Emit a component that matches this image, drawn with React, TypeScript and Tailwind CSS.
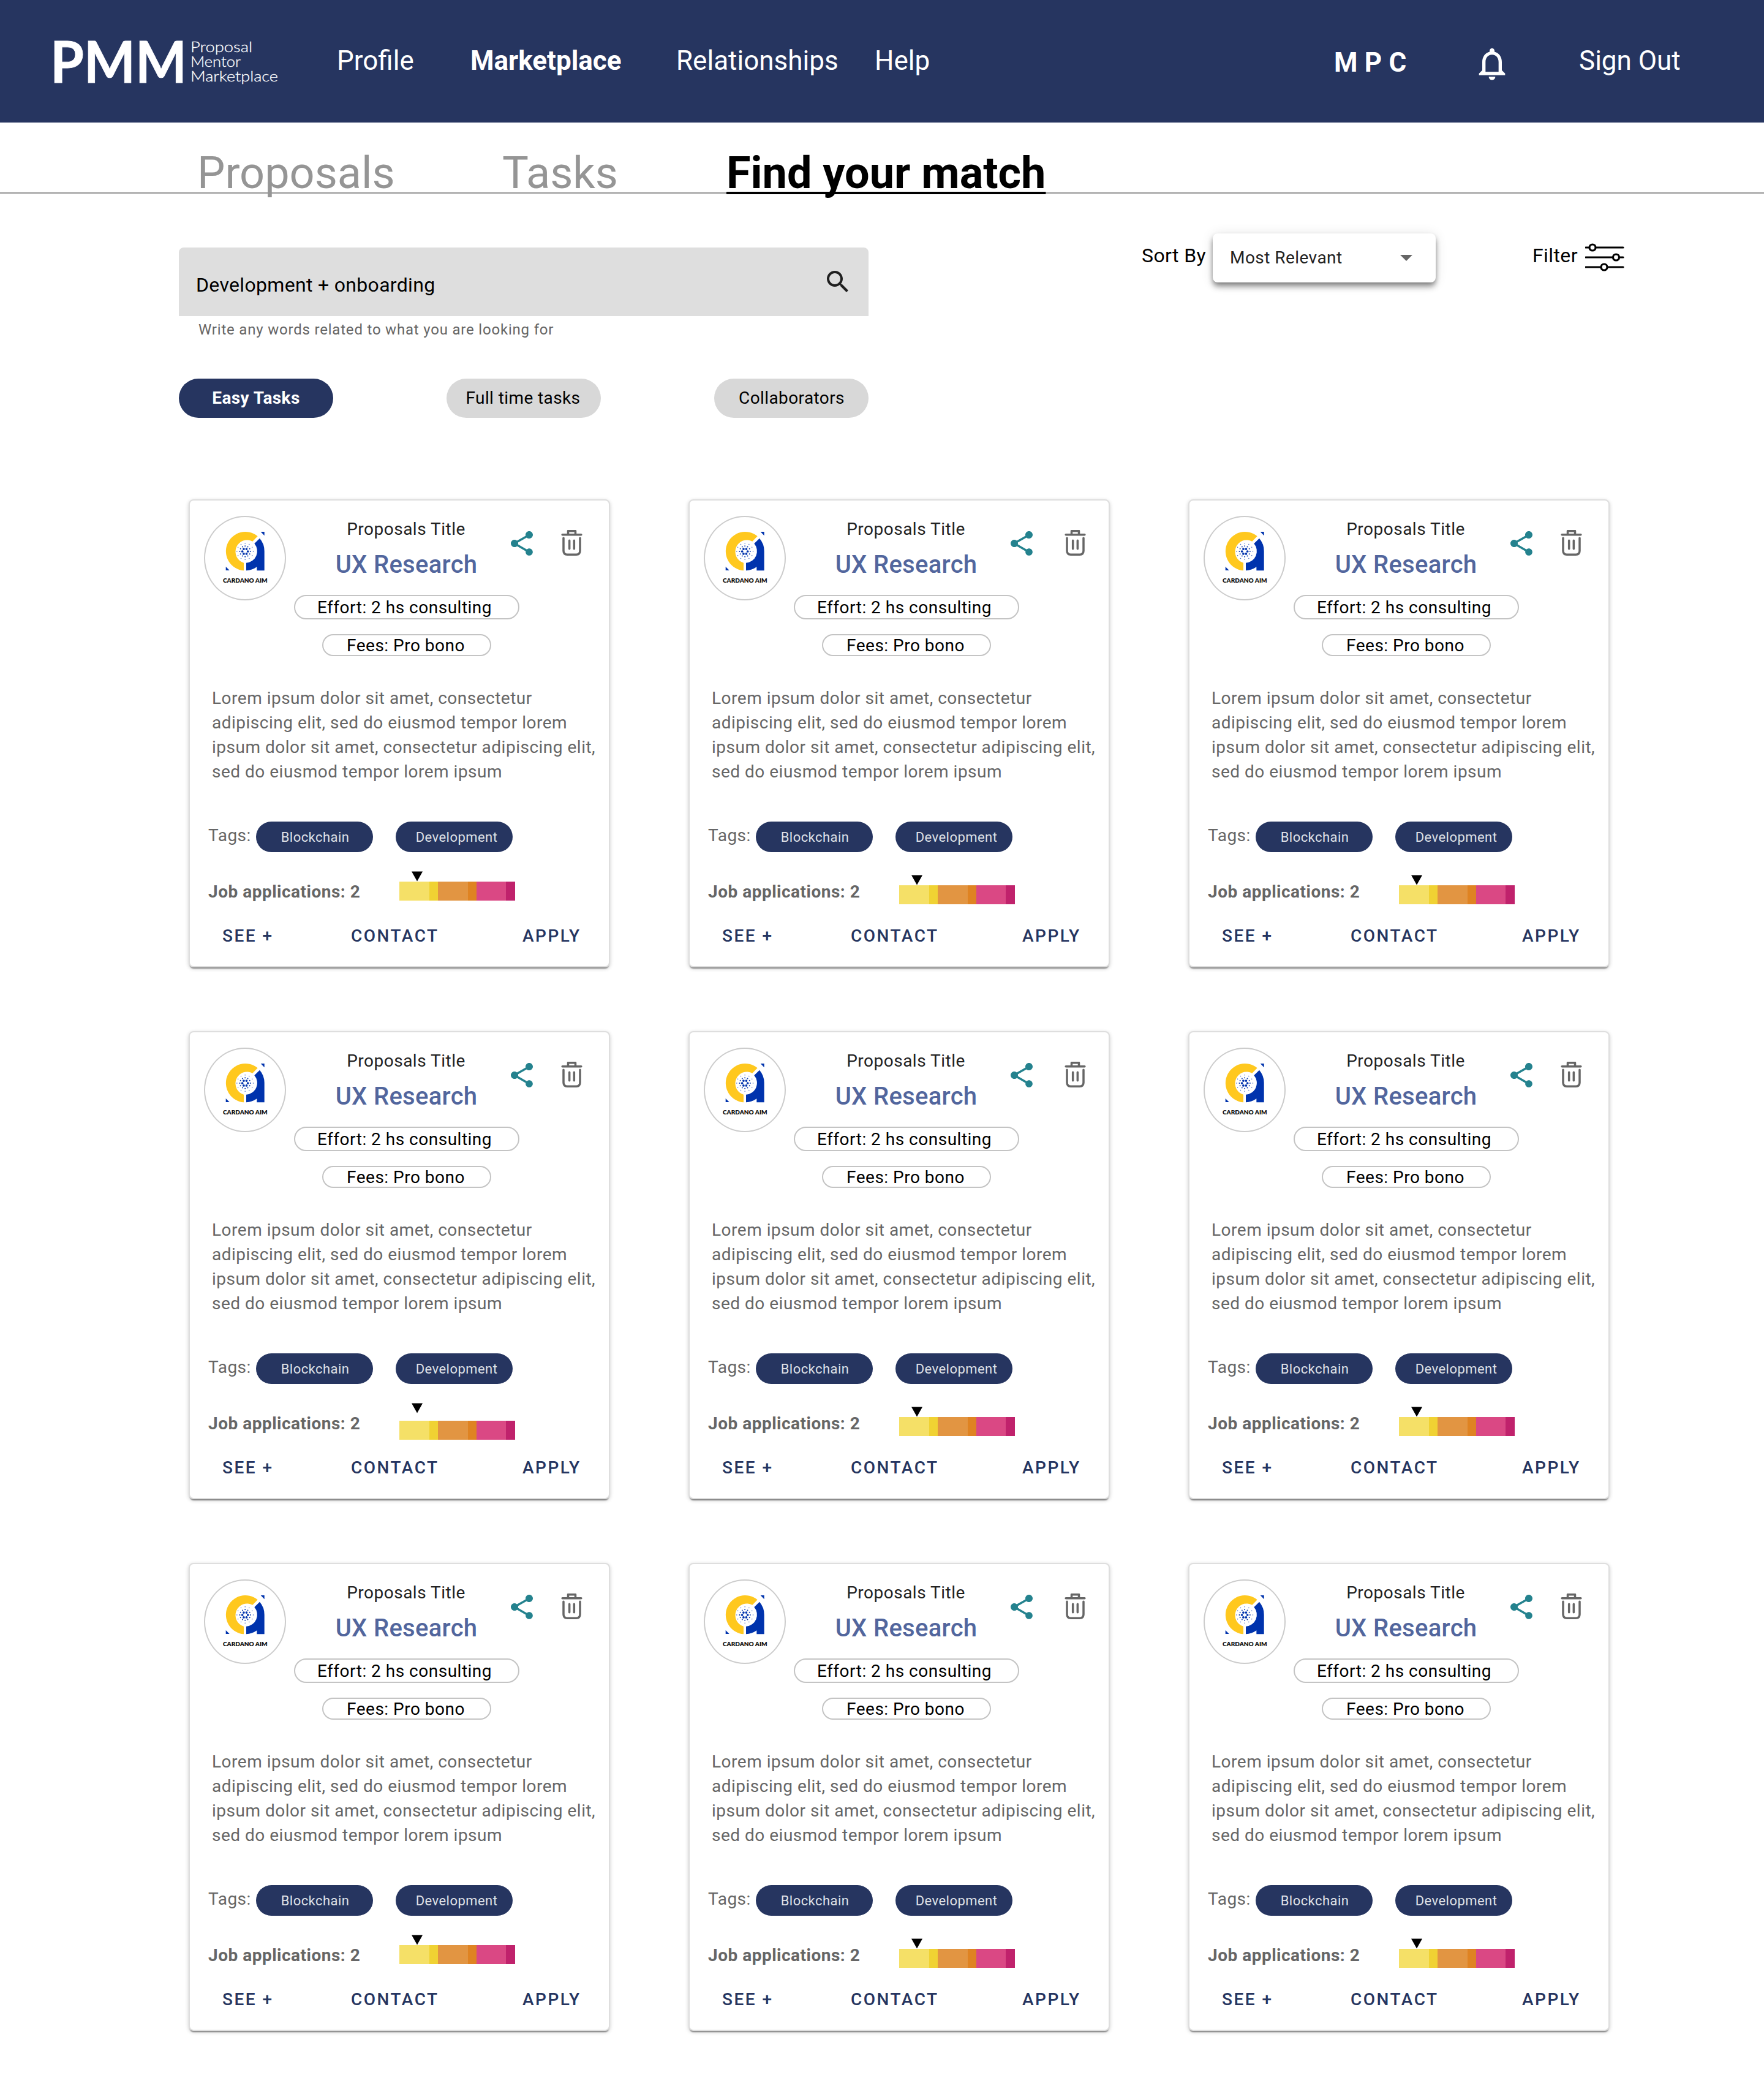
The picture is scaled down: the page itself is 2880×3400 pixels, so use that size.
const HEXAGON = [0, 1, 2, 3, 4, 5];
const DOZEN = [0, 1, 2, 3, 4, 5, 6, 7, 8, 9, 10, 11];

function polar(radius: number, degrees: number): [number, number] {
  const a = (degrees * Math.PI) / 180;
  return [239.5 + radius * Math.cos(a), 210 + radius * Math.sin(a)];
}

function Ring({ items, radius, size, step }: { items: number[]; radius: number; size: number; step: number }) {
  return (
    <>
      {items.map((i) => {
        const [cx, cy] = polar(radius, i * step);
        return <circle key={i} cx={cx} cy={cy} r={size} />;
      })}
    </>
  );
}

function CardanoLogo() {
  return (
    <svg className="h-[134px] w-[130px]" viewBox="44 42 390 402">
      <path fill="#ffc81e" d="M233 304A95 95 0 1 1 301 136L276 161A57 57 0 1 0 233 266Z" />
      <g fill="#0033ad">
        <path d="M311 146A95 95 0 0 1 334 209V304H297V286A95 95 0 0 1 245 304V266A57 57 0 0 0 285 172Z" />
        <path d="M316 114H334V133Z" />
        <path d="M145 285L163 303H145Z" />
        <Ring items={HEXAGON} radius={13.5} size={5.6} step={60} />
        <Ring items={DOZEN} radius={26} size={2.9} step={30} />
        <g opacity="0.8">
          <Ring items={DOZEN} radius={40} size={2.2} step={30} />
        </g>
      </g>
      <text x="131" y="362" fontFamily="Lato, sans-serif" fontWeight="800" fontSize="30" textLength="218" lengthAdjust="spacingAndGlyphs" fill="#111">
        CARDANO AIM
      </text>
    </svg>
  );
}

function ShareIcon() {
  return (
    <svg className="h-12 w-12 shrink-0" viewBox="0 0 24 24" fill="#24828e">
      <path d="M18 16.08c-.76 0-1.44.3-1.96.77L8.91 12.7c.05-.23.09-.46.09-.7s-.04-.47-.09-.7l7.05-4.11c.54.5 1.25.81 2.04.81 1.66 0 3-1.34 3-3s-1.34-3-3-3-3 1.34-3 3c0 .24.04.47.09.7L8.04 9.81C7.5 9.31 6.79 9 6 9c-1.66 0-3 1.34-3 3s1.34 3 3 3c.79 0 1.5-.31 2.04-.81l7.12 4.16c-.05.21-.08.43-.08.65 0 1.61 1.31 2.92 2.92 2.92 1.61 0 2.92-1.31 2.92-2.92s-1.31-2.92-2.92-2.92z" />
    </svg>
  );
}

function TrashIcon() {
  return (
    <svg className="h-[42px] w-[35px] shrink-0" viewBox="406.5 177 105 126" fill="none" stroke="#666" strokeWidth="10.5" strokeLinecap="round" strokeLinejoin="round">
      <path d="M413 200H505" />
      <path d="M441 198V182H477V198" />
      <path d="M418.500 217V279Q418.500 297.500 437 297.500H481Q499.500 297.500 499.500 279V217" />
      <path d="M447.500 229V269M470.500 229V269" />
    </svg>
  );
}

type CardLayout = { arrow: string; bar: string; trash: string };

const LEFT: CardLayout = { arrow: "mt-[31px]", bar: "", trash: "pl-10" };
const LEFT_SPLIT: CardLayout = { arrow: "mt-[31px]", bar: "mt-3", trash: "pl-10" };
const MIDDLE: CardLayout = { arrow: "mt-[37px]", bar: "", trash: "pl-[46px]" };
const RIGHT: CardLayout = { arrow: "mt-[37px]", bar: "", trash: "pl-10" };

const CARDS: CardLayout[] = [LEFT, MIDDLE, RIGHT, LEFT_SPLIT, MIDDLE, RIGHT, LEFT, MIDDLE, RIGHT];

function Meter({ layout }: { layout: CardLayout }) {
  return (
    <div className="flex w-[189px] flex-col">
      <svg className={"ml-5 h-[17px] w-[18px] shrink-0 " + layout.arrow} viewBox="0 0 18 17">
        <path d="M0 0.500H18L9 16.500Z" />
      </svg>
      <div className={"flex h-[30.500px] shrink-0 " + layout.bar}>
        <div className="w-[49px] bg-[#f5e067]" />
        <div className="w-[14px] bg-[#f0d233]" />
        <div className="w-[49px] bg-[#e29542]" />
        <div className="w-[14px] bg-[#df8322]" />
        <div className="w-[48px] bg-[#da4884]" />
        <div className="w-[14.500px] bg-[#c0226c]" />
      </div>
    </div>
  );
}

function ProposalCard({ layout }: { layout: CardLayout }) {
  return (
    <article className="flex h-[764px] w-[688px] flex-col rounded-lg border-2 border-[#dedede] bg-white shadow-[0_4px_2px_-2px_rgba(0,0,0,0.4),0_2px_6px_rgba(0,0,0,0.2)]">
      <div className="flex h-[254px] shrink-0 items-start">
        <div className="mt-[25px] ml-[23px] h-[138px] w-[134px] shrink-0 rounded-[50%] border-2 border-[#ccc]">
          <CardanoLogo />
        </div>
        <div className="ml-[13px] flex w-[368px] shrink-0 flex-col items-center pt-[31px]">
          <div className="pr-0.5 text-[28px] leading-8 tracking-[0.5px] text-[#222]">Proposals Title</div>
          <div className="mt-[18px] pr-px text-[40px] leading-[48px] font-medium tracking-[0.3px] text-[#52669d]">UX Research</div>
          <div className="mt-[25px] h-10 w-[368px] rounded-full border-2 border-[#c4c4c4] pr-[7px] text-center text-[28px] leading-[37px] tracking-[0.5px] text-black">
            Effort: 2 hs consulting
          </div>
          <div className="mt-6 h-9 w-[276px] rounded-full border-2 border-[#c4c4c4] pr-[3px] text-center text-[28px] leading-[33px] tracking-[0.5px] text-black">
            Fees: Pro bono
          </div>
        </div>
        <div className="-ml-[20px] flex pt-[46px]">
          <ShareIcon />
          <div className={"pt-[2px] " + layout.trash}>
            <TrashIcon />
          </div>
        </div>
      </div>
      <p className="mt-[48.500px] pl-9 text-[28px] leading-10 tracking-[0.5px] whitespace-nowrap text-[#666]">
        Lorem ipsum dolor sit amet, consectetur
        <br />
        adipiscing elit, sed do eiusmod tempor lorem
        <br />
        ipsum dolor sit amet, consectetur adipiscing elit,
        <br />
        sed do eiusmod tempor lorem ipsum
      </p>
      <div className="mt-[61.500px] flex h-[50px] pl-[30px]">
        <div className="mt-[3px] w-[78px] text-[28px] leading-10 tracking-[0.5px] text-[#666]">Tags:</div>
        <div className="h-[50px] w-[191px] rounded-full bg-[#263560] pl-0.5 text-center text-[22px] leading-[52px] tracking-[0.45px] text-[#dfe1e7]">Blockchain</div>
        <div className="ml-[37px] h-[50px] w-[191px] rounded-full bg-[#263560] pl-2 text-center text-[22px] leading-[52px] tracking-[0.45px] text-[#dfe1e7]">Development</div>
      </div>
      <div className="flex h-[116px] pl-[30px]">
        <div className="mt-[45px] w-[312px] text-[28px] leading-10 font-bold tracking-[0.5px] text-[#666]">Job applications: 2</div>
        <Meter layout={layout} />
      </div>
      <div className="mt-px flex pl-[53px] text-[28px] leading-10 font-medium tracking-[2.500px] text-[#263560]">
        <div className="w-[210px]">SEE +</div>
        <div className="w-[280px]">CONTACT</div>
        <div>APPLY</div>
      </div>
    </article>
  );
}

function Header() {
  return (
    <header className="flex h-[200px] items-start bg-[#263560] pt-[73px] text-[44px] leading-[52px] whitespace-nowrap text-white">
      <svg className="-mt-[73px] ml-[72px] h-[200px] w-[390px] shrink-0" viewBox="72 0 390 200" fill="#fff">
        <text x="82" y="134.500" fontFamily="Lato, sans-serif" fontWeight="700" fontSize="94" textLength="223" lengthAdjust="spacingAndGlyphs" stroke="#fff" strokeWidth="0.800">PMM</text>
        <g fontFamily="Lato, sans-serif" fontWeight="300" fontSize="24" stroke="#fff" strokeWidth="0.300">
          <text x="311" y="84.500" textLength="101" lengthAdjust="spacingAndGlyphs">Proposal</text>
          <text x="311" y="108.500" textLength="82" lengthAdjust="spacingAndGlyphs">Mentor</text>
          <text x="311" y="132.500" textLength="143" lengthAdjust="spacingAndGlyphs">Marketplace</text>
        </g>
      </svg>
      <a className="ml-[88px] w-[218px]">Profile</a>
      <a className="w-[336px] font-bold">Marketplace</a>
      <a className="w-[324px]">Relationships</a>
      <a className="w-[750px]">Help</a>
      <div className="mt-[3px] w-[226px] font-bold tracking-[0.2px]">M P C</div>
      <svg className="-mt-px h-16 w-16 shrink-0" viewBox="0 0 24 24" fill="#fff">
        <path d="M12 22c1.100 0 2-.9 2-2h-4c0 1.100.9 2 2 2zm6-6v-5c0-3.070-1.630-5.640-4.500-6.320V4c0-.83-.67-1.500-1.500-1.500s-1.500.67-1.500 1.500v.68C7.640 5.360 6 7.920 6 11v5l-2 2v1h16v-1l-2-2zm-2 1H8v-6c0-2.480 1.510-4.500 4-4.500s4 2.020 4 4.500v6z" />
      </svg>
      <a className="ml-[110px]">Sign Out</a>
    </header>
  );
}

function Tabs() {
  return (
    <nav className="flex h-[116px] border-b-2 border-[#959595] pt-[43px] pl-[322px] text-[72px] leading-[80px] whitespace-nowrap text-[#959595]">
      <a className="w-[498px]">Proposals</a>
      <a className="w-[366px]">Tasks</a>
      <a className="font-bold text-black underline decoration-[4px] underline-offset-[6px] [text-decoration-skip-ink:none]">Find your match</a>
    </nav>
  );
}

function SearchPanel() {
  return (
    <div className="w-[1126px] pt-[23px]">
      <div className="flex h-28 items-start justify-between rounded-t-lg bg-[#dedede] pt-8 pr-[26px] pl-7">
        <div className="mt-[9px] text-[32px] leading-10 tracking-[0.32px] text-black">Development + onboarding</div>
        <svg className="h-12 w-12" viewBox="0 0 24 24" fill="#1f1f1f">
          <path d="M15.500 14h-.79l-.28-.27C15.410 12.590 16 11.110 16 9.500 16 5.910 13.090 3 9.500 3S3 5.910 3 9.500 5.910 16 9.500 16c1.610 0 3.090-.59 4.230-1.570l.27.28v.79l5 4.990L20.490 19l-4.990-5zm-6 0C7.010 14 5 11.990 5 9.500S7.010 5 9.500 5 14 7.010 14 9.500 11.990 14 9.500 14z" />
        </svg>
      </div>
      <div className="mt-[6px] pl-8 text-[24px] leading-8 tracking-[0.8px] text-[#666]">Write any words related to what you are looking for</div>
      <div className="mt-16 flex justify-between text-center text-[28px] leading-16 tracking-[0.4px] text-black">
        <div className="w-[252px] rounded-full bg-[#263560] font-bold text-white">Easy Tasks</div>
        <div className="w-[252px] rounded-full bg-[#d8d8d8] pr-0.5">Full time tasks</div>
        <div className="w-[252px] rounded-full bg-[#d8d8d8] pl-px">Collaborators</div>
      </div>
    </div>
  );
}

function SortAndFilter() {
  return (
    <div className="ml-[445px] flex items-start text-[32px] leading-10 tracking-[0.4px] whitespace-nowrap text-black">
      <div className="mt-4 w-[117px] pl-px">Sort By</div>
      <div className="flex h-20 w-[364px] items-start justify-between rounded-lg bg-white pt-[15px] pr-6 pl-7 shadow-[0_2px_20px_rgba(0,0,0,0.12),0_8px_10px_rgba(0,0,0,0.24),0_4px_8px_-2px_rgba(0,0,0,0.4)]">
        <div className="mt-[5px] text-[28px] leading-10 tracking-[0.45px] text-[#222]">Most Relevant</div>
        <svg className="h-12 w-12" viewBox="0 0 24 24" fill="#666">
          <path d="M7 10l5 5 5-5z" />
        </svg>
      </div>
      <div className="mt-4 ml-[158px] w-[86px]">Filter</div>
      <svg className="mt-4 h-[46px] w-[66px]" viewBox="2589 397 66 46" fill="#fff" stroke="#000" strokeWidth="3.200" strokeLinecap="round">
        <path d="M2590 404H2651M2590 420H2651M2590 436H2651" />
        <circle cx="2601" cy="404" r="5" />
        <circle cx="2639.500" cy="420" r="5" />
        <circle cx="2620" cy="436" r="5" />
      </svg>
    </div>
  );
}

export default function App() {
  return (
    <div className="h-[3400px] w-[2880px] overflow-hidden bg-white font-[Roboto,sans-serif]">
      <Header />
      <Tabs />
      <section className="flex h-[434px] items-start pt-[65px] pl-[292px]">
        <SearchPanel />
        <SortAndFilter />
      </section>
      <main className="grid grid-cols-[repeat(3,688px)] gap-x-32 gap-y-[104px] pt-[65px] pl-[308px]">
        {CARDS.map((layout, i) => (
          <ProposalCard key={i} layout={layout} />
        ))}
      </main>
    </div>
  );
}
